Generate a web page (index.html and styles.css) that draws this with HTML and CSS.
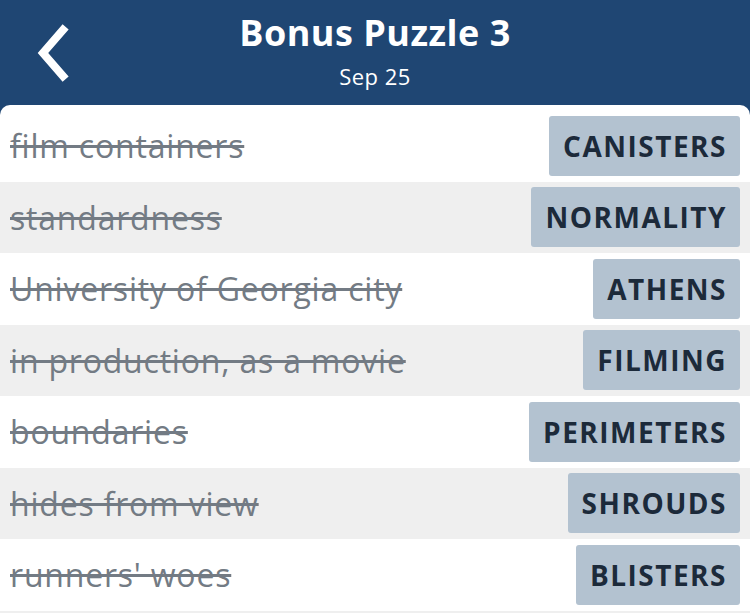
FILE: index.html
```html
<!DOCTYPE html>
<html lang="en">

<head>
  <meta charset="UTF-8">
  <meta name="viewport" content="width=device-width, initial-scale=1.0">
  <title>Bonus Puzzle 3</title>
  <link rel="stylesheet" href="styles.css">
</head>

<body>
  <div class="header">
    <div class="back">
      <svg width="40" height="60" viewBox="0 0 40 60">
        <polyline points="30,6 10,29 30,52" fill="none" stroke="#fff" stroke-width="8" stroke-linecap="square" stroke-linejoin="miter"/>
      </svg>
    </div>
    <div class="title-block">
      <h1>Bonus Puzzle 3</h1>
      <div class="date">Sep 25</div>
    </div>
    <div></div>
  </div>

  <div class="main">
    <div class="card">
      <div class="row">
        <span class="clue">film containers</span>
        <span class="answer">CANISTERS</span>
      </div>
      <div class="row">
        <span class="clue">standardness</span>
        <span class="answer">NORMALITY</span>
      </div>
      <div class="row">
        <span class="clue">University of Georgia city</span>
        <span class="answer">ATHENS</span>
      </div>
      <div class="row">
        <span class="clue">in production, as a movie</span>
        <span class="answer">FILMING</span>
      </div>
      <div class="row">
        <span class="clue">boundaries</span>
        <span class="answer">PERIMETERS</span>
      </div>
      <div class="row">
        <span class="clue">hides from view</span>
        <span class="answer">SHROUDS</span>
      </div>
      <div class="row">
        <span class="clue">runners' woes</span>
        <span class="answer">BLISTERS</span>
      </div>
    </div>
  </div>
</body>

</html>
```

FILE: styles.css
```css
body {
  margin: 0;
  background-color: #efefef;
  font-family: "Open Sans", Lato, sans-serif;
}

.header {
  display: grid;
  grid-template-columns: 1fr auto 1fr;
  align-items: start;
  height: 105px;
  background-color: #1f4673;
  color: #fff;
}

.back {
  padding: 24px 0 0 33px;
}

.back svg {
  display: block;
}

.title-block {
  text-align: center;
  padding-top: 10px;
}

.title-block h1 {
  margin: 0;
  font-size: 36px;
  font-weight: 700;
  line-height: 46px;
  letter-spacing: 0.5px;
}

.date {
  margin-top: 7px;
  font-size: 22px;
  line-height: 26px;
  letter-spacing: 0.5px;
}

.main {
  background: linear-gradient(to bottom, #1f4673 20px, #efefef 20px);
}

.card {
  background-color: #fff;
  border-radius: 10px 10px 0 0;
  padding-top: 5px;
}

.row {
  display: flex;
  justify-content: space-between;
  align-items: center;
  height: 71.5px;
  padding: 0 10px;
}

.row:nth-child(even) {
  background-color: #efefef;
}

.clue {
  color: #737b84;
  font-size: 32px;
  letter-spacing: 0.8px;
  text-decoration: line-through;
  white-space: nowrap;
}

.answer {
  display: flex;
  align-items: center;
  height: 60px;
  padding: 0 13px 0 14px;
  background-color: #b3c2d0;
  border-radius: 3px;
  color: #1c2a3a;
  font-size: 28px;
  font-weight: 700;
  letter-spacing: 1.5px;
}
```
